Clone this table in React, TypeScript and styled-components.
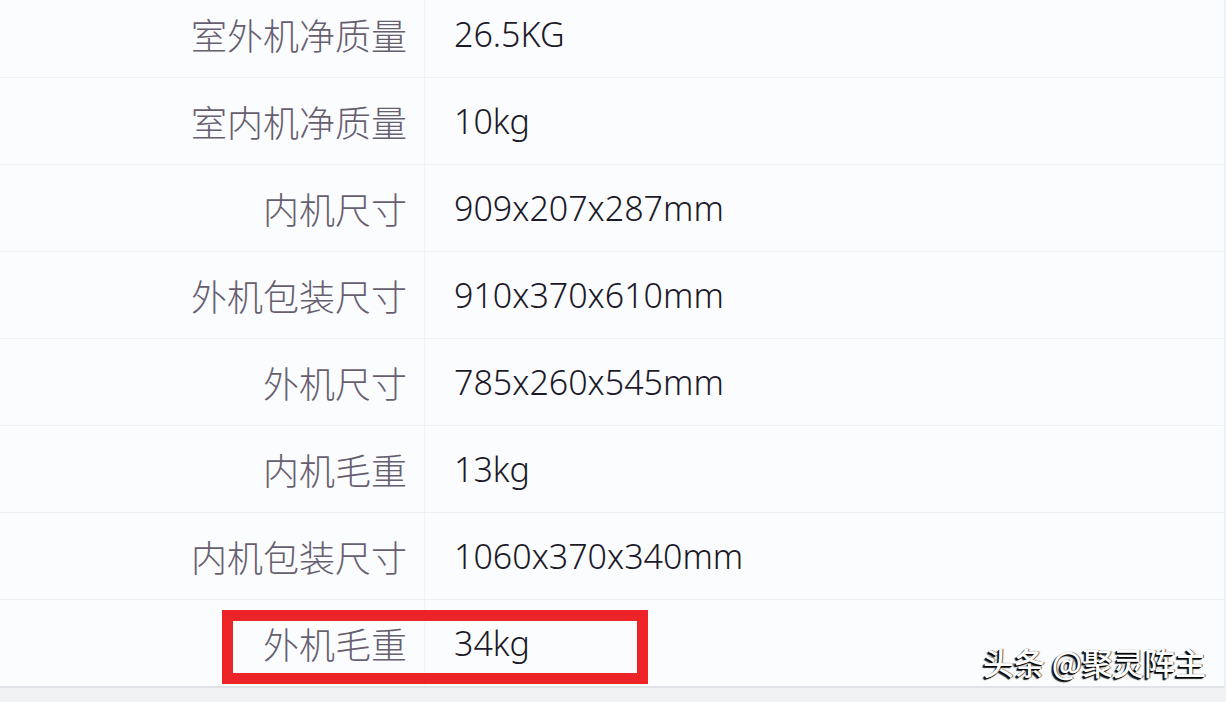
import React from 'react';
import styled, { createGlobalStyle } from 'styled-components';

const rows = [
  { label: '室外机净质量', value: '26.5KG' },
  { label: '室内机净质量', value: '10kg' },
  { label: '内机尺寸', value: '909x207x287mm' },
  { label: '外机包装尺寸', value: '910x370x610mm' },
  { label: '外机尺寸', value: '785x260x545mm' },
  { label: '内机毛重', value: '13kg' },
  { label: '内机包装尺寸', value: '1060x370x340mm' },
  { label: '外机毛重', value: '34kg', marked: true },
];

const GlobalStyle = createGlobalStyle`
  html, body {
    margin: 0;
    padding: 0;
    background: #f2f3f5;
    overflow: hidden;
  }
  body {
    font-family: "Noto Sans", "Noto Sans CJK SC", sans-serif;
  }
`;

const Page = styled.div`
  width: 1226px;
  height: 702px;
  position: relative;
  overflow: hidden;
  background: #f1f2f4;
`;

const Table = styled.div`
  margin-top: -9px;
  width: 1224px;
  background: #fbfcfe;
  border-right: 1px solid #eceff3;
  border-bottom: 2px solid #dfe2e6;
`;

const Row = styled.div`
  position: relative;
  display: grid;
  grid-template-columns: 425px 1fr;
  height: 86px;
  border-bottom: 1px solid #eef2f6;

  &:last-child {
    border-bottom: none;
  }
`;

const Label = styled.div`
  display: flex;
  align-items: center;
  justify-content: flex-end;
  padding-right: 17px;
  border-right: 1px solid #f0f3f7;
  font-family: "Noto Sans CJK SC", sans-serif;
  font-size: 36px;
  font-weight: 300;
  color: #675f70;
`;

const Value = styled.div`
  display: flex;
  align-items: center;
  padding-left: 29px;
  font-family: "Noto Sans", "Noto Sans CJK SC", sans-serif;
  font-size: 34px;
  font-weight: 300;
  color: #1c1a28;
`;

const Marker = styled.div`
  position: absolute;
  left: 222px;
  top: 10px;
  width: 426px;
  height: 74px;
  box-sizing: border-box;
  border: 11px solid #ec2428;
  pointer-events: none;
`;

const Watermark = styled.div`
  position: absolute;
  right: 20px;
  bottom: 18px;
  font-family: "Noto Sans CJK SC", sans-serif;
  font-size: 31px;
  font-weight: 500;
  color: #ffffff;
  letter-spacing: 0;
  text-shadow: -1px 1px 0 #000, -2px 2px 1px #222, 1px 0 1px #555;
`;

export default function App() {
  return (
    <Page>
      <GlobalStyle />
      <Table>
        {rows.map((r) => (
          <Row key={r.label}>
            <Label>{r.label}</Label>
            <Value>{r.value}</Value>
            {r.marked && <Marker />}
          </Row>
        ))}
      </Table>
      <Watermark>头条 @聚灵阵主</Watermark>
    </Page>
  );
}
